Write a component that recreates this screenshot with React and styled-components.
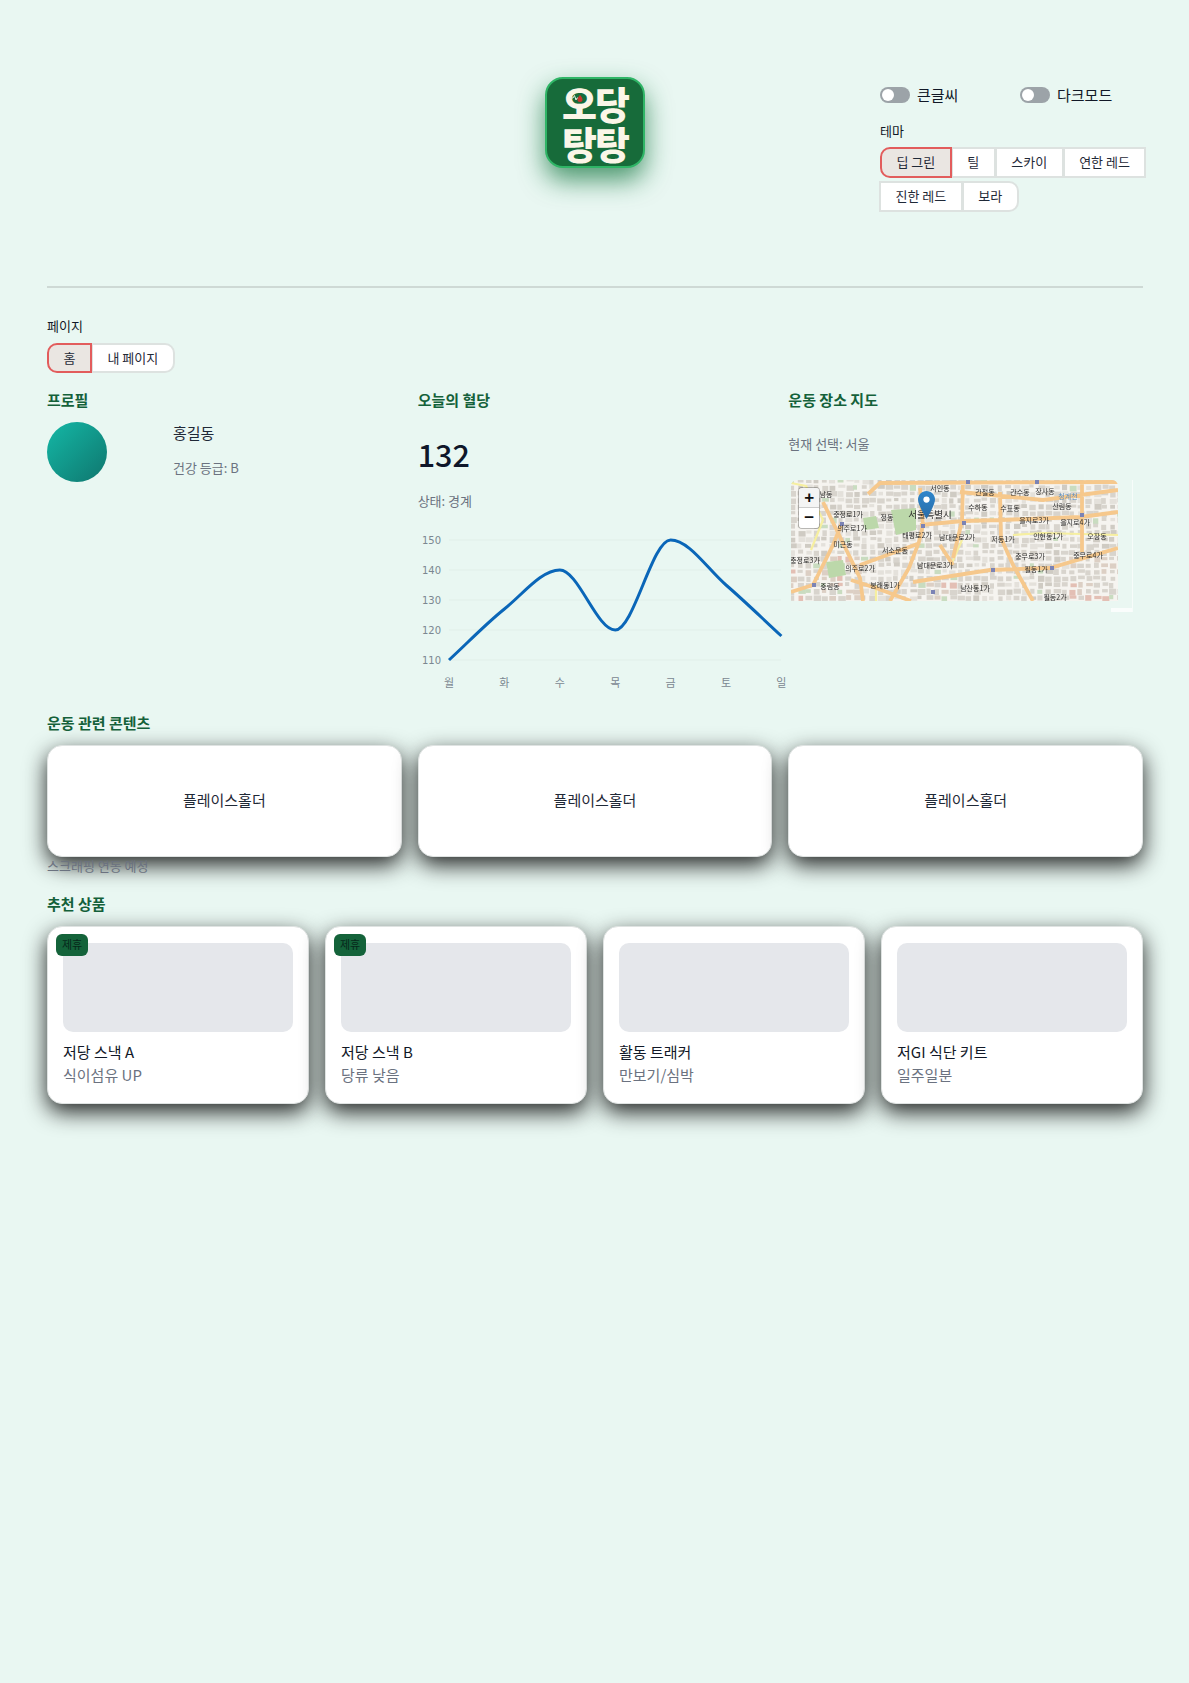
import React from 'react'
import styled, { createGlobalStyle } from 'styled-components'

const GlobalStyle = createGlobalStyle`
  html, body {
    margin: 0;
    padding: 0;
    background: #e9f7f2;
  }
  body {
    font-family: 'Noto Sans CJK KR', 'Noto Sans CJK JP', sans-serif;
    color: #111827;
  }
  * { box-sizing: border-box; }
`

const Page = styled.div`
  min-height: 1683px;
  padding: 0 46px 0 47px;
`

const Header = styled.header`
  height: 288px;
  display: grid;
  grid-template-columns: 1fr auto 1fr;
  border-bottom: 2px solid #ced9d5;
`

const Logo = styled.div`
  margin-top: 77px;
  width: 100px;
  height: 91px;
  border-radius: 18px;
  background: #176b3a;
  border: 2px solid #2fb566;
  box-shadow: 0 12px 26px rgba(15, 115, 60, 0.72);
  color: #fbf6e8;
  font-weight: 900;
  font-size: 38px;
  letter-spacing: -2px;
  text-align: center;
  position: relative;
  padding-top: 4px;
`

const LogoLine = styled.div`
  height: 40px;
  line-height: 40px;
`

const LogoMark = styled.svg`
  position: absolute;
  left: 23px;
  top: 14px;
`

const Controls = styled.div`
  justify-self: end;
  width: 263px;
  padding-top: 85px;
`

const ToggleRow = styled.div`
  display: flex;
  margin-bottom: 17px;
`

const ToggleItem = styled.div`
  display: flex;
  align-items: center;
  gap: 7px;
  flex: 0 0 140px;
  font-size: 15px;
  line-height: 20px;
`

const Toggle = styled.span`
  width: 30px;
  height: 16px;
  border-radius: 8px;
  background: #9ca3a8;
  padding: 2px;
  display: block;
  &::before {
    content: '';
    display: block;
    width: 12px;
    height: 12px;
    border-radius: 50%;
    background: #fff;
  }
`

const FieldLabel = styled.div`
  font-size: 13px;
  line-height: 18px;
  margin-bottom: ${p => p.$gap || 7}px;
`

const Segments = styled.div`
  display: flex;
  flex-wrap: wrap;
  row-gap: 3px;
  margin-right: -4px;
  & > button:first-child { border-radius: 10px 0 0 10px; }
  & > button:last-child { border-radius: 0 10px 10px 0; }
`

const Segment = styled.button`
  height: ${p => p.$h || 31}px;
  padding: 0 14.5px 2px;
  font-family: inherit;
  font-size: 13px;
  color: #1f2937;
  background: ${p => (p.$active ? '#eae6e2' : '#fff')};
  border: 2px solid ${p => (p.$active ? '#e25c5c' : '#dde2e0')};
  margin-left: -1px;
  position: relative;
  z-index: ${p => (p.$active ? 1 : 0)};
  &:first-child { margin-left: 0; }
`

const PageNav = styled.div`
  padding-top: 29px;
  margin-bottom: 16px;
`

const TopGrid = styled.div`
  display: grid;
  grid-template-columns: repeat(3, minmax(0, 1fr));
  gap: 16px;
  height: 323px;
`

const SectionTitle = styled.h2`
  margin: 0;
  font-size: 15px;
  line-height: 22px;
  font-weight: 700;
  color: #14613a;
`

const ProfileRow = styled.div`
  display: flex;
  margin-top: 11px;
`

const Avatar = styled.div`
  width: 60px;
  height: 60px;
  border-radius: 50%;
  background: linear-gradient(135deg, #14b8a6, #0f766e);
  margin-right: 66px;
`

const ProfileName = styled.div`
  font-size: 15px;
  line-height: 22px;
  color: #1f2937;
`

const Muted = styled.div`
  font-size: 13px;
  line-height: 20px;
  color: #6b7280;
`

const ProfileGrade = styled(Muted)`
  margin-top: 14px;
`

const Glucose = styled.div`
  margin-top: 21px;
  font-size: 30.5px;
  line-height: 44px;
  font-weight: 500;
  color: #0f172a;
`

const StatusLine = styled(Muted)`
  margin-top: 15px;
`

const ChartSvg = styled.svg`
  display: block;
  margin-top: 22px;
  overflow: visible;
`

const MapNote = styled(Muted)`
  margin-top: 23px;
`

const MapFrame = styled.div`
  position: relative;
  margin: 26px 0 0 3px;
  width: 342px;
  height: 132px;
  border-right: 1px solid rgba(255, 255, 255, 0.6);
  background: rgba(255, 255, 255, 0.06);
`

const MapSvg = styled.svg`
  display: block;
  border-radius: 6px 6px 0 0;
  filter: blur(0.5px);
`

const ZoomBox = styled.div`
  position: absolute;
  left: 8px;
  top: 8px;
  width: 20px;
  border-radius: 3px;
  overflow: hidden;
  box-shadow: 0 0 0 1px rgba(0, 0, 0, 0.25);
`

const ZoomButton = styled.div`
  height: 20px;
  background: ${p => (p.$top ? '#f4f4f4' : '#fff')};
  font-family: 'Liberation Sans', sans-serif;
  font-size: 17px;
  font-weight: 700;
  line-height: 19px;
  text-align: center;
  color: #111;
  border-bottom: ${p => (p.$top ? '1px solid #ccc' : 'none')};
`

const Pin = styled.svg`
  position: absolute;
  left: 127px;
  top: 11px;
`

const Attribution = styled.div`
  position: absolute;
  right: 0;
  bottom: 0;
  width: 21px;
  height: 4px;
  background: rgba(255, 255, 255, 0.75);
`

const ContentGrid = styled.div`
  display: grid;
  grid-template-columns: repeat(3, minmax(0, 1fr));
  gap: 16px;
  margin-top: 11px;
`

const Card = styled.div`
  background: #fff;
  border-radius: 15px;
  border: 1px solid #dfe3e2;
  box-shadow: 0 8px 22px rgba(0, 0, 0, 0.85);
`

const PlaceholderCard = styled(Card)`
  height: 112px;
  padding-bottom: 3px;
  display: flex;
  align-items: center;
  justify-content: center;
  font-size: 15px;
  color: #1f2937;
`

const ScrapeNote = styled(Muted)`
  height: 20px;
  line-height: 18px;
`

const ProductHeading = styled(SectionTitle)`
  margin-top: 16px;
`

const ProductGrid = styled.div`
  display: grid;
  grid-template-columns: repeat(4, minmax(0, 1fr));
  gap: 16px;
  margin-top: 11px;
`

const ProductCard = styled(Card)`
  position: relative;
  height: 178px;
  padding: 15.5px 15px;
`

const Thumb = styled.div`
  height: 89px;
  border-radius: 10px;
  background: #e5e7eb;
`

const Badge = styled.span`
  position: absolute;
  left: 8px;
  top: 7px;
  height: 22px;
  padding: 0 6px;
  border-radius: 6px;
  background: #14633a;
  color: #06281a;
  font-size: 11px;
  line-height: 20px;
`

const ProductName = styled.div`
  margin-top: 9px;
  font-size: 15px;
  line-height: 22px;
  color: #111827;
`

const ProductSub = styled.div`
  margin-top: 1px;
  font-size: 15px;
  line-height: 22px;
  color: #6b7280;
`

const THEMES = ['딥 그린', '틸', '스카이', '연한 레드', '진한 레드', '보라']

const PRODUCTS = [
  { name: '저당 스낵 A', sub: '식이섬유 UP', badge: true },
  { name: '저당 스낵 B', sub: '당류 낮음', badge: true },
  { name: '활동 트래커', sub: '만보기/심박' },
  { name: '저GI 식단 키트', sub: '일주일분' },
]

const DAYS = ['월', '화', '수', '목', '금', '토', '일']
const VALUES = [110, 127, 140, 120, 150, 135, 118]

// monotone cubic through the points, same curve recharts draws
function monotonePath(pts) {
  const n = pts.length
  const d = []
  for (let i = 0; i < n - 1; i++) d.push((pts[i + 1][1] - pts[i][1]) / (pts[i + 1][0] - pts[i][0]))
  const m = [d[0]]
  for (let i = 1; i < n - 1; i++) {
    if (d[i - 1] * d[i] <= 0) m.push(0)
    else m.push((2 * d[i - 1] * d[i]) / (d[i - 1] + d[i]))
  }
  m.push(d[n - 2])
  let path = `M${pts[0][0]},${pts[0][1]}`
  for (let i = 0; i < n - 1; i++) {
    const h = (pts[i + 1][0] - pts[i][0]) / 3
    path += `C${pts[i][0] + h},${pts[i][1] + m[i] * h} ${pts[i + 1][0] - h},${pts[i + 1][1] - m[i + 1] * h} ${pts[i + 1][0]},${pts[i + 1][1]}`
  }
  return path
}

function GlucoseChart() {
  const xAt = i => 31 + i * 55.4
  const yAt = v => 7 + (150 - v) * 3
  const pts = VALUES.map((v, i) => [xAt(i), yAt(v)])
  return (
    <ChartSvg width="370" height="165" viewBox="0 0 370 165">
      {[150, 140, 130, 120, 110].map(v => (
        <g key={v}>
          <line x1="31" x2="363" y1={yAt(v)} y2={yAt(v)} stroke="#e1efe9" />
          <text x="23" y={yAt(v) + 4} textAnchor="end" fontSize="10" fontFamily="DejaVu Sans" fill="#7b8791">{v}</text>
        </g>
      ))}
      {DAYS.map((d, i) => (
        <text key={d} x={xAt(i)} y="154" textAnchor="middle" fontSize="11" fill="#7b8791">{d}</text>
      ))}
      <path d={monotonePath(pts)} fill="none" stroke="#0a66b8" strokeWidth="3" />
    </ChartSvg>
  )
}

// city blocks for the map tiles, a seeded random so every render is the same
function cityBlocks() {
  let seed = 11
  const rnd = () => {
    seed = (seed * 16807) % 2147483647
    return seed / 2147483647
  }
  const out = []
  for (let y = -2; y < 121; y += 6.5) {
    for (let x = -2; x < 327; x += 8) {
      const r = rnd()
      // bottom corners are pinker, like the reference tiles
      const pinkZone = (x < 70 && y > 70) || (x > 270 && y > 70) || (x > 130 && x < 165 && y > 90)
      let fill = '#d8d4cd'
      if (r > 0.82) fill = pinkZone ? '#e3bfb4' : '#cfcbc3'
      else if (r > 0.6) fill = pinkZone ? '#dccfc4' : '#e4e1db'
      else if (r < 0.05) fill = '#c9dcc0'
      out.push({
        x: +(x + rnd() * 1.6).toFixed(1),
        y: +(y + rnd() * 1.4).toFixed(1),
        w: +(4 + rnd() * 3.6).toFixed(1),
        h: +(3 + rnd() * 3).toFixed(1),
        fill,
      })
    }
  }
  return out
}

const CITY_BLOCKS = cityBlocks()

const MAJOR_ROADS = [
  'M77,14L89,3L327,2',
  'M0,112L22,105L42,65L51,43',
  'M129,8L132,45L128,62L118,88L99,121',
  'M129,45L172,41L209,40L290,37L327,32',
  'M122,102L199,90L259,88L327,68',
  'M172,2L171,41L162,78',
  'M209,12L210,58L222,85L242,121',
  'M291,2L291,72',
  'M169,12L252,20L327,10',
  'M32,22L69,98L72,121',
  'M69,85L129,63',
  'M149,65L162,85',
  'M60,100L85,108L120,121',
]

const YELLOW_ROADS = [
  'M0,3L15,6L32,40L20,70',
  'M171,60L160,85',
  'M222,55L252,53L327,55',
  'M85,105L85,121',
]

const PARKS = [
  'M100,30L125,28L125,50L105,55Z',
  'M72,38L85,36L88,48L74,50Z',
  'M35,82L52,80L55,95L38,98Z',
]

const SQUARES = [[175, 0], [244, 0], [49, 42], [130, 44], [171, 41], [289, 33], [200, 88], [259, 86], [21, 103], [140, 110]]

const MAP_LABELS = [
  ['서인동', 149, 11], ['관철동', 194, 15], ['관수동', 229, 15], ['장사동', 254, 14],
  ['수하동', 187, 30], ['수표동', 219, 31], ['산림동', 271, 29], ['을지로3가', 243, 43],
  ['을지로4가', 284, 45], ['남동', 35, 17], ['충정로1가', 57, 37], ['의주로1가', 61, 51],
  ['정동', 96, 40], ['태평로2가', 126, 58], ['남대문로2가', 166, 60], ['저동1가', 212, 62],
  ['인현동1가', 257, 59], ['오장동', 306, 59], ['미근동', 52, 67], ['서소문동', 104, 73],
  ['충무로3가', 239, 79], ['충무로4가', 297, 78], ['남대문로3가', 144, 88], ['의주로2가', 69, 91],
  ['필동1가', 245, 92], ['충정로3가', 14, 83], ['봉래동1가', 94, 108], ['중림동', 39, 109],
  ['남산동1가', 184, 111], ['필동2가', 264, 120],
]

function MapTiles() {
  return (
    <MapSvg width="327" height="121" viewBox="0 0 327 121">
      <rect width="327" height="121" fill="#f6f4f0" />
      {CITY_BLOCKS.map(b => <rect key={`${b.x}-${b.y}`} x={b.x} y={b.y} width={b.w} height={b.h} fill={b.fill} />)}
      {PARKS.map(d => <path key={d} d={d} fill="#bcd8aa" />)}
      <path d={YELLOW_ROADS.join('')} stroke="#f6efa0" strokeWidth="2.2" fill="none" />
      <path d={MAJOR_ROADS.join('')} stroke="#f6c88c" strokeWidth="3.8" fill="none" />
      {SQUARES.map(([x, y]) => <rect key={`${x}-${y}`} x={x} y={y} width="4" height="4" fill="#7b83b5" />)}
      <g fontSize="7" fill="#2d2d2d" textAnchor="middle">
        {MAP_LABELS.map(([t, x, y]) => <text key={t} x={x} y={y}>{t}</text>)}
        <text x="139" y="38" fontSize="9.5">서울특별시</text>
        <text x="277" y="19" fill="#5b8fc4">청계천</text>
      </g>
    </MapSvg>
  )
}

function PlaceMap() {
  return (
    <MapFrame>
      <MapTiles />
      <Pin width="17" height="28" viewBox="0 0 25 41">
        <defs>
          <linearGradient id="pin" x1="0" y1="0" x2="0" y2="1">
            <stop offset="0" stopColor="#2e85cb" />
            <stop offset="1" stopColor="#2a6da8" />
          </linearGradient>
        </defs>
        <path d="M12.5,0C5.6,0 0,5.6 0,12.5C0,21 12.5,41 12.5,41C12.5,41 25,21 25,12.5C25,5.6 19.4,0 12.5,0Z" fill="url(#pin)" />
        <circle cx="12.5" cy="12.5" r="4.6" fill="#fff" />
      </Pin>
      <ZoomBox>
        <ZoomButton $top>+</ZoomButton>
        <ZoomButton>−</ZoomButton>
      </ZoomBox>
      <Attribution />
    </MapFrame>
  )
}

export default function App() {
  return (
    <Page>
      <GlobalStyle />
      <Header>
        <span />
        <Logo>
          <LogoLine>오당</LogoLine>
          <LogoLine>탕탕</LogoLine>
          <LogoMark width="14" height="10" viewBox="0 0 14 10">
            <path d="M0,5H3L4.5,2.5L6,7L7,5H8" fill="none" stroke="#dff1e4" strokeWidth="1" />
            <path d="M10,2C10,2 12.5,4.8 12.5,6.6A2.5,2.5 0 0 1 7.5,6.6C7.5,4.8 10,2 10,2Z" fill="#c9352c" />
          </LogoMark>
        </Logo>
        <Controls>
          <ToggleRow>
            <ToggleItem><Toggle />큰글씨</ToggleItem>
            <ToggleItem><Toggle />다크모드</ToggleItem>
          </ToggleRow>
          <FieldLabel>테마</FieldLabel>
          <Segments>
            {THEMES.map((t, i) => <Segment key={t} $active={i === 0}>{t}</Segment>)}
          </Segments>
        </Controls>
      </Header>

      <PageNav>
        <FieldLabel $gap={8}>페이지</FieldLabel>
        <Segments>
          <Segment $active $h={30}>홈</Segment>
          <Segment $h={30}>내 페이지</Segment>
        </Segments>
      </PageNav>

      <TopGrid>
        <section>
          <SectionTitle>프로필</SectionTitle>
          <ProfileRow>
            <Avatar />
            <div>
              <ProfileName>홍길동</ProfileName>
              <ProfileGrade>건강 등급: B</ProfileGrade>
            </div>
          </ProfileRow>
        </section>
        <section>
          <SectionTitle>오늘의 혈당</SectionTitle>
          <Glucose>132</Glucose>
          <StatusLine>상태: 경계</StatusLine>
          <GlucoseChart />
        </section>
        <section>
          <SectionTitle>운동 장소 지도</SectionTitle>
          <MapNote>현재 선택: 서울</MapNote>
          <PlaceMap />
        </section>
      </TopGrid>

      <SectionTitle>운동 관련 콘텐츠</SectionTitle>
      <ContentGrid>
        <PlaceholderCard>플레이스홀더</PlaceholderCard>
        <PlaceholderCard>플레이스홀더</PlaceholderCard>
        <PlaceholderCard>플레이스홀더</PlaceholderCard>
      </ContentGrid>
      <ScrapeNote>스크래핑 연동 예정</ScrapeNote>

      <ProductHeading>추천 상품</ProductHeading>
      <ProductGrid>
        {PRODUCTS.map(p => (
          <ProductCard key={p.name}>
            {p.badge && <Badge>제휴</Badge>}
            <Thumb />
            <ProductName>{p.name}</ProductName>
            <ProductSub>{p.sub}</ProductSub>
          </ProductCard>
        ))}
      </ProductGrid>
    </Page>
  )
}
